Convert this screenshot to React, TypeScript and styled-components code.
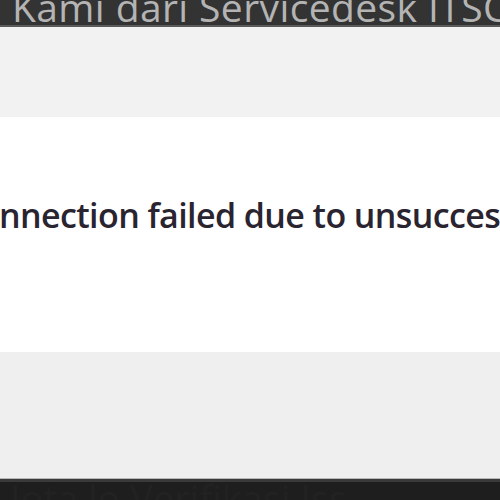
import React from "react";
import styled, { createGlobalStyle } from "styled-components";

const Global = createGlobalStyle`
  html, body { margin: 0; padding: 0; background: #1e1e1e; }
  #root { width: 500px; height: 500px; overflow: hidden; }
`;

const Screen = styled.div`
  width: 500px;
  height: 500px;
  display: flex;
  flex-direction: column;
  overflow: hidden;
  font-family: "Open Sans", "Noto Sans", sans-serif;
`;

const TitleBar = styled.div`
  height: 25px;
  flex: none;
  background: #333333;
  border-bottom: 2px solid #5a5a5a;
  overflow: hidden;
  display: flex;
  align-items: flex-start;
  padding-left: 12px;
`;

const TitleText = styled.span`
  font-size: 39px;
  line-height: 1;
  color: #b4b4b4;
  white-space: nowrap;
  margin-top: -13px;
  letter-spacing: 0.4px;
`;

const Band = styled.div<{ $h: number; $bg: string }>`
  height: ${(p) => p.$h}px;
  flex: none;
  background: ${(p) => p.$bg};
`;

const MessagePanel = styled.div`
  height: 235px;
  flex: none;
  background: #ffffff;
  display: flex;
  align-items: flex-start;
  overflow: hidden;
  padding-top: 81px;
  box-sizing: border-box;
`;

const Message = styled.span`
  font-size: 34px;
  font-weight: 600;
  letter-spacing: -0.6px;
  line-height: 1;
  color: #2a2430;
  white-space: nowrap;
  margin-left: -1px;
`;

const Taskbar = styled.div`
  flex: 1;
  background: #1e1e1e;
  border-top: 1px solid #b8b8b8;
  box-shadow: inset 0 3px 0 #3a3a3a;
  overflow: hidden;
  padding-left: 10px;
`;

const GhostText = styled.span`
  font-size: 38px;
  line-height: 1;
  color: #222222;
  white-space: nowrap;
`;

export default function App() {
  return (
    <>
      <Global />
      <Screen>
        <TitleBar>
          <TitleText>Kami dari Servicedesk ITSC</TitleText>
        </TitleBar>
        <Band $h={90} $bg="#f2f2f2" />
        <MessagePanel>
          <Message>nnection failed due to unsuccessful</Message>
        </MessagePanel>
        <Band $h={126} $bg="#efefef" />
        <Taskbar>
          <GhostText>Iota lo Verifikasi Iss</GhostText>
        </Taskbar>
      </Screen>
    </>
  );
}
